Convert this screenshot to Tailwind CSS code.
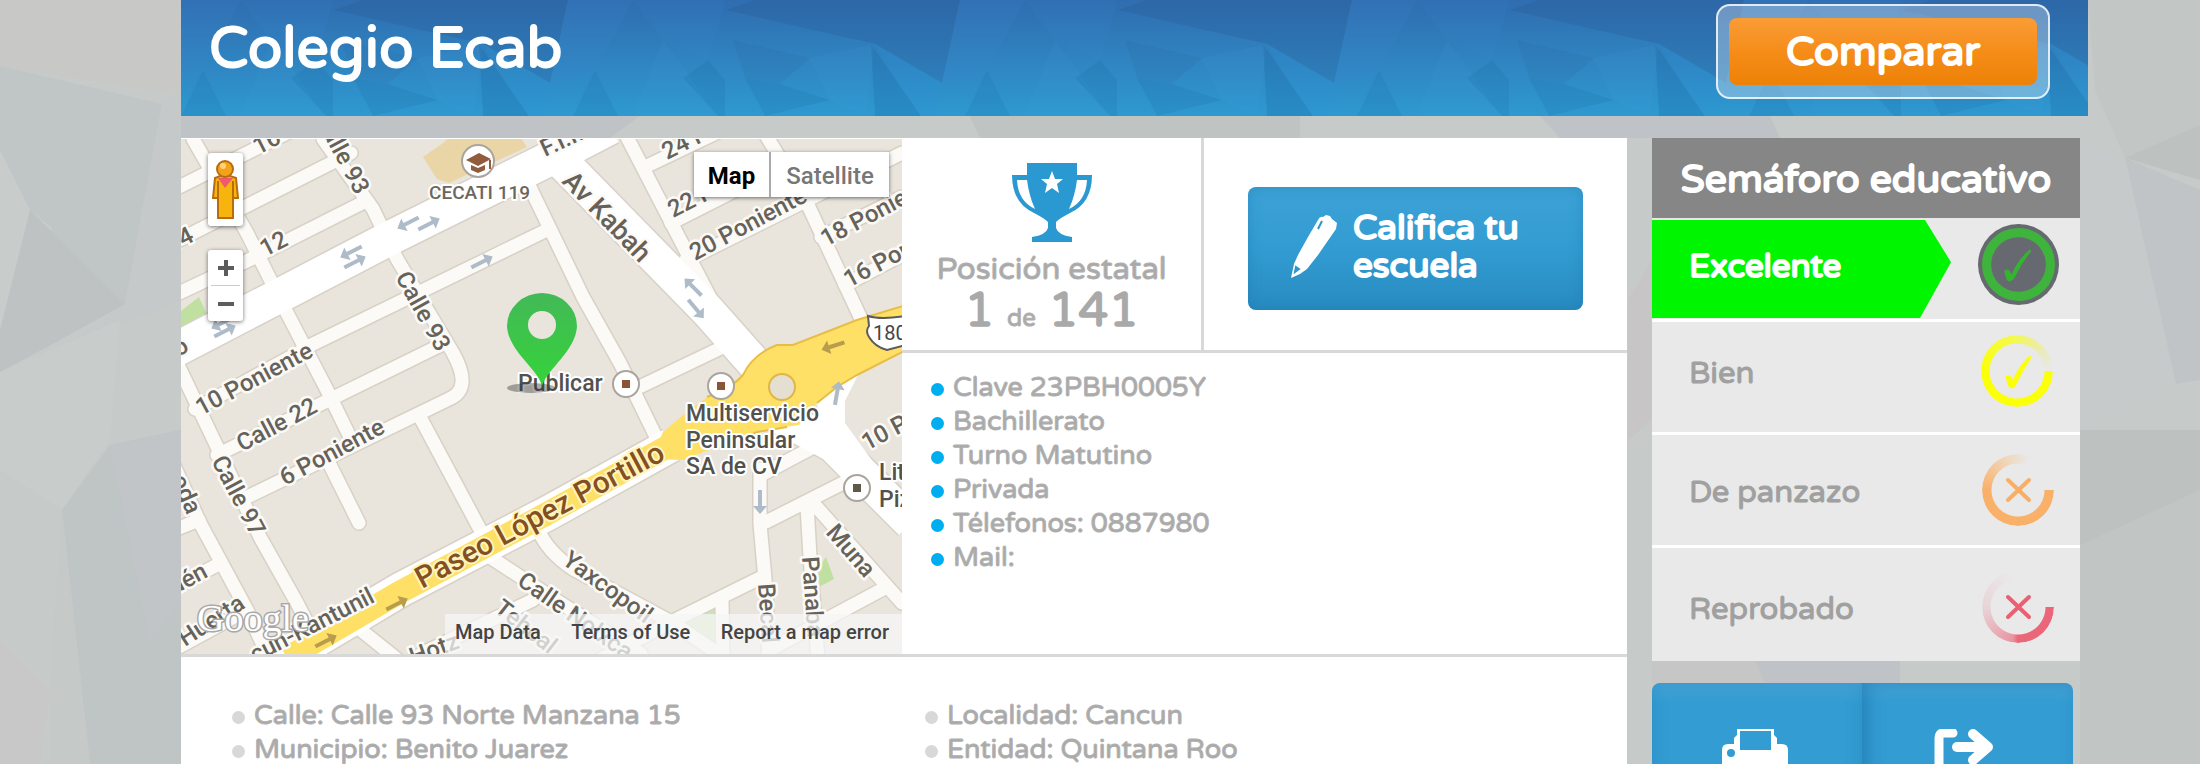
<!DOCTYPE html>
<html lang="es">
<head>
<meta charset="utf-8">
<title>Colegio Ecab</title>
<script src="https://cdn.jsdelivr.net/npm/@tailwindcss/browser@4"></script>
</head>
<body class="bg-[#c5c9c9] font-['Varela_Round','Open_Sans',sans-serif] text-[#a9a9a9]">
<div class="relative isolate h-screen overflow-hidden pl-[181px] pr-[112px]">

  <!-- Faceted paper background -->
  <svg class="absolute inset-0 -z-10 h-full w-full" viewBox="0 0 2200 764" preserveAspectRatio="xMidYMid slice" aria-hidden="true">
    <rect width="2200" height="764" fill="#c6cac9"/>
    <path d="M0 0H181V95L0 66Z" fill="#c8c8c7"/>
    <path d="M0 66L162 104L125 304L30 210L0 150Z" fill="#c0c5c6"/>
    <path d="M0 150L30 210L52 228L0 330Z" fill="#c8cccb"/>
    <path d="M125 304L162 104L181 90V300L60 350Z" fill="#c6c9c9"/>
    <path d="M30 210L125 304L60 340L0 372V330Z" fill="#bec2c2"/>
    <path d="M0 372L120 320L110 440L62 510L0 470Z" fill="#c8cccb"/>
    <path d="M62 510L110 445L181 430V764H90Z" fill="#bfc4c4"/>
    <path d="M110 445L181 430V600L150 640Z" fill="#c1c5c7"/>
    <path d="M0 640L50 690L40 764H0Z" fill="#c8c8c8"/>
    <path d="M62 510L90 764H50L50 690Z" fill="#c5c9c8"/>
    <path d="M181 116H640L610 138H181Z" fill="#c0c3c6"/>
    <path d="M970 116L980 138H1300V116Z" fill="#bfc3c2"/>
    <path d="M1540 116H1770L1780 138H1560Z" fill="#bfc3c8"/>
    <path d="M2088 0H2200V130L2125 158L2095 90Z" fill="#c2c6c5"/>
    <path d="M2125 158L2200 125V180Z" fill="#bdc2c1"/>
    <path d="M2125 158L2200 190V380L2176 384Z" fill="#c1c4c7"/>
    <path d="M2080 138L2125 158L2176 384L2080 430Z" fill="#c7caca"/>
    <path d="M2080 430H2200V500L2080 545Z" fill="#bdc2c1"/>
    <path d="M2080 545L2200 490V764H2080Z" fill="#c1c5c4"/>
    <path d="M1628 300L1652 260V420L1628 440Z" fill="#c7c5c5"/>
    <path d="M1652 661H1760L1770 683H1652Z" fill="#c7c6c6"/>
    <path d="M1755 661H1900V683H1765Z" fill="#bfc3c7"/>
  </svg>

  <header class="relative isolate flex h-[116px] items-start justify-between bg-linear-to-b from-[#2f6db0] to-[#2e99d0] pl-[28px] pr-[38px]">
    <svg class="absolute inset-0 -z-10 h-full w-full" aria-hidden="true">
      <defs>
        <pattern id="facets" x="152" y="0" width="392" height="116" patternUnits="userSpaceOnUse">
          <path d="M0 10L30 0H235L217 83L150 44Z" fill="#24548f" fill-opacity=".24"/>
          <path d="M146 44L196 116H150Z" fill="#0d5c94" fill-opacity=".2"/>
          <path d="M150 44L217 83L210 116H196Z" fill="#2a8fd0" fill-opacity=".2"/>
          <path d="M8 40L85 58L55 84L20 78Z" fill="#24548f" fill-opacity=".1"/>
          <path d="M20 78L55 84L105 100L40 116Z" fill="#0d5c94" fill-opacity=".14"/>
          <path d="M85 58L150 44L140 116L105 100Z" fill="#49a4de" fill-opacity=".08"/>
          <path d="M235 0H300L262 70L217 83Z" fill="#3f86cf" fill-opacity=".16"/>
          <path d="M262 70L285 116H240Z" fill="#0d5c94" fill-opacity=".12"/>
          <path d="M300 0H392L375 60L330 40Z" fill="#3f86cf" fill-opacity=".08"/>
          <path d="M330 40L385 116H300Z" fill="#49a4de" fill-opacity=".1"/>
          <path d="M375 60L392 80V116H385L350 78Z" fill="#0d5c94" fill-opacity=".14"/>
        </pattern>
      </defs>
      <rect width="100%" height="100%" fill="url(#facets)"/>
    </svg>
    <h1 class="pt-[17px] text-[57px] leading-[64px] text-white [-webkit-text-stroke:2px_#fff]">Colegio Ecab</h1>
    <div class="mt-[4px] rounded-[14px] border-2 border-white/80 bg-white/30 px-[11px] py-[12px]">
      <button type="button" class="h-[67px] w-[308px] rounded-[8px] bg-linear-to-b from-[#fa9c35] via-[#f58d17] to-[#ee8107] text-[41px] leading-[48px] text-white [-webkit-text-stroke:2px_#fff]">Comparar</button>
    </div>
  </header>

  <div class="mt-[22px] flex items-start gap-[25px] pr-[8px]">
    <main class="min-w-0 flex-1 bg-white">
      <div class="flex border-b-[3px] border-[#d8d8d8]">

        <!-- Map -->
        <section aria-label="Mapa" class="relative mt-px h-[515px] w-[721px] shrink-0 overflow-hidden font-['Roboto',sans-serif] text-[#444]">
          <svg class="block h-full w-full" viewBox="0 0 721 515" preserveAspectRatio="xMidYMid slice" font-family="Roboto, sans-serif">
            <defs>
              <g id="minor" fill="none" stroke-linecap="round" stroke-linejoin="round">
                <path d="M12 0L66 94L92 146L106 174L146 251L168 296"/>
                <path d="M149 326L178 384"/>
                <path d="M142 0L192 70L216 120L272 214Q292 250 268 260L62 360"/>
                <path d="M-2 48L110 -8"/><path d="M-2 101L170 14"/>
                <path d="M-2 154L72 119L185 62"/>
                <path d="M126 208L366 91"/><path d="M36 316L264 204"/><path d="M14 270L128 208"/>
                <path d="M345 40L402 158L439 224L478 304"/>
                <path d="M450 252L542 208"/>
                <path d="M446 -2L506 114L535 170"/><path d="M468 26L560 -18"/>
                <path d="M490 84L600 28"/><path d="M504 122L721 14"/>
                <path d="M586 -2L626 64L682 184"/>
                <path d="M640 98L721 58"/><path d="M664 146L721 116"/>
                <path d="M-2 228L39 314L79 398L116 464L132 495"/>
                <path d="M-10 320L19 384L66 471L86 515"/>
                <path d="M-2 389L18 381"/><path d="M-2 446L38 425"/><path d="M-2 508L64 472"/>
                <path d="M239 278L302 396"/>
                <path d="M309 418L370 458L460 515"/>
                <path d="M358 392Q366 412 392 430L492 484L545 520"/>
                <path d="M352 461L240 515"/><path d="M176 488L216 520"/>
                <path d="M579 330V385L585 451L588 520"/>
                <path d="M581 438L492 482L420 520"/><path d="M541 462L542 520"/>
                <path d="M585 383L664 343"/><path d="M580 336L640 304"/>
                <path d="M626 366L629 418L637 520"/>
                <path d="M632 364L721 464"/><path d="M702 450L590 510"/>
              </g>
              <g id="major" fill="none">
                <path d="M-10 213L211 98L380 14L430 -12"/>
                <path d="M378 20L526 171L580 232"/>
                <path d="M592 274L652 306L730 384"/>
                <path d="M100 522L219 451L369 373L490 306"/>
              </g>
              <path id="arrow" d="M-12 -2H4V-7L12 0L4 7V2H-12Z"/>
              <linearGradient id="pin" x1="0" y1="0" x2="0" y2="1"><stop offset="0" stop-color="#43b957"/><stop offset="1" stop-color="#35d33a"/></linearGradient>
            </defs>
            <rect width="721" height="515" fill="#e9e5dd"/>
            <path d="M242 18L262 4L268 -1H340L346 8L268 44L256 40Z" fill="#e9d5a6"/>
            <path d="M0 172L18 158L26 176L0 192Z" fill="#bfe0a0"/>
            <path d="M637 430L645 418L653 440L638 448Z" fill="#bfe0a0"/>
            <path d="M500 480L534 470V515H530L500 500Z" fill="#c9e3b4"/>
            <use href="#minor" stroke="#d8d1c6" stroke-width="16"/>
            <use href="#major" stroke="#d8d1c6" stroke-width="37"/>
            <use href="#minor" stroke="#fbfaf7" stroke-width="13"/>
            <use href="#major" stroke="#fff" stroke-width="34"/>
            <path d="M636 262L656 246L678 234L664 262V284L690 320L640 300Z" fill="#fff"/>
            <path d="M482 293L502 276L526 258Q552 248 562 236Q572 215 596 206H612L676 181L725 166V211L676 236L656 248L636 264L618 286L576 292L502 321L470 320Z" fill="#ffe067"/>
            <path d="M526 258Q552 248 562 236Q572 215 596 206H612L676 181L725 166M725 211L676 236L656 248L636 264M606 288L576 293L560 300" fill="none" stroke="#e8bd45" stroke-width="2"/>
            <path d="M106 519L219 453L369 373L500 300" fill="none" stroke="#ffe067" stroke-width="23"/>
            <circle cx="601" cy="248" r="13" fill="#e5dfd2" stroke="#e0b646" stroke-width="2"/>

            <g fill="#aebbc8">
              <use href="#arrow" transform="translate(227 84) rotate(153)"/><use href="#arrow" transform="translate(248 85) rotate(-27)"/>
              <use href="#arrow" transform="translate(170 113) rotate(153)"/><use href="#arrow" transform="translate(174 123) rotate(-27)"/>
              <use href="#arrow" transform="translate(41 184) rotate(153)"/><use href="#arrow" transform="translate(44 192) rotate(-27)"/>
              <use href="#arrow" transform="translate(301 123) rotate(-27)"/>
              <use href="#arrow" transform="translate(512 148) rotate(225)"/><use href="#arrow" transform="translate(515 170) rotate(50)"/>
              <use href="#arrow" transform="translate(579 363) rotate(90)"/><use href="#arrow" transform="translate(656 254) rotate(-80)"/>
            </g>
            <g fill="#b89d4c">
              <use href="#arrow" transform="translate(652 207) rotate(162)"/><use href="#arrow" transform="translate(216 465) rotate(-27)"/><use href="#arrow" transform="translate(145 502) rotate(-27)"/>
            </g>

            <g font-size="24" font-weight="500" fill="#66625a" stroke="#fbfaf7" stroke-width="5" stroke-linejoin="round" paint-order="stroke">
              <text transform="translate(77 16) rotate(-27)">16</text>
              <text transform="translate(134 -20) rotate(62)">Calle 93</text>
              <text transform="translate(84 118) rotate(-27)">12</text>
              <text transform="translate(-10 114) rotate(-27)">14</text>
              <text transform="translate(-3 218) rotate(-27)">o</text>
              <text transform="translate(214 138) rotate(61)">Calle 93</text>
              <text transform="translate(20 277) rotate(-28)">10 Poniente</text>
              <text transform="translate(61 313) rotate(-28)">Calle 22</text>
              <text transform="translate(104 347) rotate(-28)">6 Poniente</text>
              <text transform="translate(30 322) rotate(62)">Calle 97</text>
              <text transform="translate(-10 340) rotate(66)">oda</text>
              <text transform="translate(-7 456) rotate(-28)">dén</text>
              <text transform="translate(4 508) rotate(-33)">Huerta</text>
              <text transform="translate(74 524) rotate(-27)">cun-Kantunil</text>
              <text transform="translate(364 18) rotate(-25)">F.I.M.</text>
              <text transform="translate(486 21) rotate(-27)">24 P</text>
              <text transform="translate(492 79) rotate(-27)">22 P</text>
              <text transform="translate(514 122) rotate(-28)">20 Poniente</text>
              <text transform="translate(645 108) rotate(-28)">18 Poniente</text>
              <text transform="translate(668 149) rotate(-28)">16 Poniente</text>
              <text transform="translate(686 312) rotate(-28)">10 Poniente</text>
              <text transform="translate(380 424) rotate(36)">Yaxcopoil</text>
              <text transform="translate(335 445) rotate(35)">Calle Nolxca</text>
              <text transform="translate(644 394) rotate(49)">Muna</text>
              <text transform="translate(621 418) rotate(86)">Panaba</text>
              <text transform="translate(577 445) rotate(86)">Becal</text>
              <text transform="translate(312 472) rotate(38)">Tehcal</text>
              <text transform="translate(232 526) rotate(-20)">Hotz</text>
              <text transform="translate(380 43) rotate(46)" font-size="27">Av Kabah</text>
            </g>
            <text transform="translate(241 450) rotate(-28)" font-size="30" font-weight="500" fill="#84501f" stroke="#fff4bd" stroke-width="4" paint-order="stroke">Paseo López Portillo</text>

            <g fill="#fff" stroke="#aaa59c" stroke-width="2">
              <circle cx="297" cy="22" r="16"/><circle cx="445" cy="245" r="13"/><circle cx="540" cy="247" r="13"/><circle cx="676" cy="349" r="13"/>
            </g>
            <path d="M285 21L298 14L310 20L297 27ZM290 26L297 29L304 26V31L297 34L290 31ZM308 21H310V30H308Z" fill="#905c3c"/>
            <g fill="#8a5436"><rect x="441" y="241" width="8" height="8"/><rect x="536" y="243" width="8" height="8"/><rect x="672" y="345" width="8" height="8" fill="#5f594b"/></g>

            <g font-size="23" font-weight="500" fill="#53514c" stroke="#fff" stroke-width="4" stroke-linejoin="round" paint-order="stroke">
              <text x="248" y="60" font-size="19" fill="#6b675f">CECATI 119</text>
              <text x="337" y="252">Publicar</text>
              <text x="505" y="282">Multiservicio</text>
              <text x="505" y="309">Peninsular</text>
              <text x="505" y="335">SA de CV</text>
              <text x="698" y="341">Litto</text>
              <text x="698" y="368">Pizza</text>
            </g>
            <path d="M687 177Q700 181 725 177V206L706 211Q694 208 688 198Q684 192 688 187Z" fill="#fff" stroke="#5b5b5b" stroke-width="2"/>
            <text x="692" y="201" font-size="20" fill="#444">180</text>

            <ellipse cx="350" cy="249" rx="24" ry="5" fill="#333" fill-opacity=".4"/>
            <path fill-rule="evenodd" d="M361 247C357 230 327 212 326 187A35 33 0 0 1 396 187C395 212 366 230 361 247ZM361 172A14 14 0 1 0 361 200A14 14 0 1 0 361 172Z" fill="url(#pin)"/>
            <text x="16" y="492" font-family="Liberation Serif, serif" font-size="38" fill="#fff" stroke="#a8a8a8" stroke-width="3" paint-order="stroke">Google</text>
          </svg>

          <button type="button" aria-label="Street View" class="absolute left-[27px] top-[14px] h-[73px] w-[35px] rounded-[3px] bg-white shadow-[0_1px_4px_rgba(0,0,0,.55)]">
            <svg viewBox="0 0 35 73" class="h-full w-full" stroke="#b86c12" stroke-width="2">
              <path d="M7 25Q17 20 28 25L30 45H25V65H10V45H5Z" fill="#f7b40d"/>
              <path d="M10 28V44M25 28V44" fill="none"/>
              <path d="M10 25H25L17 35Z" fill="#ef5b6c" stroke="none"/>
              <circle cx="17" cy="16" r="8" fill="#f4a21a"/>
              <circle cx="15" cy="13" r="3" fill="#ffd37a" stroke="none"/>
            </svg>
          </button>
          <div class="absolute left-[27px] top-[111px] flex h-[71px] w-[35px] flex-col divide-y divide-[#ccc] rounded-[3px] bg-white px-[3px] shadow-[0_1px_4px_rgba(0,0,0,.55)]">
            <button type="button" aria-label="Acercar" class="grid flex-1 place-items-center"><svg class="size-[18px]" viewBox="0 0 18 18"><path d="M1 9H17M9 1V17" stroke="#5c5c5c" stroke-width="4"/></svg></button>
            <button type="button" aria-label="Alejar" class="grid flex-1 place-items-center"><svg class="size-[18px]" viewBox="0 0 18 18"><path d="M1 9H17" stroke="#5c5c5c" stroke-width="4"/></svg></button>
          </div>
          <div class="absolute right-[13px] top-[13px] flex h-[45px] divide-x-2 divide-[#aaa] bg-white text-[24px] shadow-[0_1px_4px_rgba(0,0,0,.55)]">
            <button type="button" class="w-[77px] pt-[3px] font-bold text-black">Map</button>
            <button type="button" class="w-[118px] pt-[3px] font-medium text-[#777]">Satellite</button>
          </div>
          <nav class="absolute bottom-0 right-0 flex h-[40px] w-[457px] items-center justify-between bg-[#f5f5f5]/75 pb-[4px] pl-[10px] pr-[13px] text-[20px] font-medium">
            <a href="#">Map Data</a><a href="#">Terms of Use</a><a href="#">Report a map error</a>
          </nav>
        </section>

        <div class="flex min-w-0 flex-1 flex-col">
          <div class="flex h-[215px] border-b-[3px] border-[#d8d8d8]">
            <section class="flex w-[302px] shrink-0 flex-col items-center border-r-[3px] border-[#d8d8d8] pt-[25px]">
              <svg class="h-[79px] w-[80px]" viewBox="0 0 80 79" fill="#2b99d1" aria-hidden="true">
                <path d="M15 0H65V12H80Q80 40 58 50Q48 55 44 59V65Q46 72 60 74V79H20V74Q34 72 36 65V59Q32 55 22 50Q0 40 0 12H15Z"/>
                <path d="M5 17H15Q17 33 23 46Q6 38 5 17ZM75 17H65Q63 33 57 46Q74 38 75 17Z" fill="#fff"/>
                <path d="M40 8L43 16H51L45 21L47 30L40 25L33 30L35 21L29 16H37Z" fill="#fff"/>
              </svg>
              <p class="pt-[8px] text-[31px] leading-[40px] [-webkit-text-stroke:1px_#b0b0b0]">Posición estatal</p>
              <p class="text-[48px] leading-[42px] font-bold">1 <span class="text-[24px] font-normal [-webkit-text-stroke:1px_#b0b0b0]">de</span> 141</p>
            </section>
            <div class="flex flex-1 items-center justify-center pt-[9px]">
              <button type="button" class="flex h-[123px] w-[335px] items-center rounded-[8px] bg-linear-to-b from-[#3da2d6] via-[#329cd2] to-[#288bc0] pl-[42px] pb-[3px] text-left text-[35px] leading-[38px] text-white shadow-[inset_0_0_14px_rgba(20,110,165,.35)] [-webkit-text-stroke:2px_#fff]">
                <svg class="h-[64px] w-[48px] shrink-0" viewBox="0 0 48 64" fill="#fff" aria-hidden="true">
                  <path d="M1 63L4 49L8 40L18 22L28 5Q30 1 33 2L36 0L40 1L42 4L47 8L46 14L28 40L17 54L10 59Z"/>
                  <path d="M6 52L9 54L5 57ZM32 6L28 14" fill="#2f95ca" stroke="#2f95ca" stroke-width="2"/>
                </svg>
                <span class="pl-[15px]">Califica tu<br>escuela</span>
              </button>
            </div>
          </div>
          <ul class="pl-[29px] pt-[18px] text-[27px] leading-[34px] [-webkit-text-stroke:1px_#b0b0b0]">
            <li class="flex items-center gap-[9px]"><span class="mt-[2px] size-[13px] rounded-full bg-[#00adee]"></span>Clave 23PBH0005Y</li>
            <li class="flex items-center gap-[9px]"><span class="mt-[2px] size-[13px] rounded-full bg-[#00adee]"></span>Bachillerato</li>
            <li class="flex items-center gap-[9px]"><span class="mt-[2px] size-[13px] rounded-full bg-[#00adee]"></span>Turno Matutino</li>
            <li class="flex items-center gap-[9px]"><span class="mt-[2px] size-[13px] rounded-full bg-[#00adee]"></span>Privada</li>
            <li class="flex items-center gap-[9px]"><span class="mt-[2px] size-[13px] rounded-full bg-[#00adee]"></span>Télefonos: 0887980</li>
            <li class="flex items-center gap-[9px]"><span class="mt-[2px] size-[13px] rounded-full bg-[#00adee]"></span>Mail:</li>
          </ul>
        </div>
      </div>

      <div class="flex pb-[60px] pl-[51px] pt-[42px] text-[27px] leading-[34px] [-webkit-text-stroke:1px_#b0b0b0]">
        <ul class="w-[693px]">
          <li class="flex items-center gap-[9px]"><span class="mt-[2px] size-[13px] rounded-full bg-[#d8d8d8]"></span>Calle: Calle 93 Norte Manzana 15</li>
          <li class="flex items-center gap-[9px]"><span class="mt-[2px] size-[13px] rounded-full bg-[#d8d8d8]"></span>Municipio: Benito Juarez</li>
        </ul>
        <ul class="flex-1">
          <li class="flex items-center gap-[9px]"><span class="mt-[2px] size-[13px] rounded-full bg-[#d8d8d8]"></span>Localidad: Cancun</li>
          <li class="flex items-center gap-[9px]"><span class="mt-[2px] size-[13px] rounded-full bg-[#d8d8d8]"></span>Entidad: Quintana Roo</li>
        </ul>
      </div>
    </main>

    <aside class="w-[428px] shrink-0">
      <h2 class="h-[80px] bg-[#868686] pt-[15px] text-center text-[39px] leading-[54px] text-white [-webkit-text-stroke:2px_#fff]">Semáforo educativo</h2>
      <ul class="divide-y-[3px] divide-white border-t-2 border-[#e9e9e9] bg-[#e9e9e9] text-[31px] leading-[40px] text-[#a0a0a0] [-webkit-text-stroke:1px_currentColor]">
        <li class="flex h-[102px] items-start justify-between pr-[21px]">
          <span class="flex h-[98px] w-[299px] items-center bg-[#00f600] pb-[4px] pl-[37px] text-[33px] text-white [-webkit-text-stroke:2px_#fff] [clip-path:polygon(0_0,273px_0,100%_43%,268px_100%,0_100%)]">Excelente</span>
          <svg class="mt-[4px] size-[81px]" viewBox="0 0 80 80" aria-hidden="true">
            <circle cx="40" cy="40" r="40" fill="#66696f"/><circle cx="40" cy="40" r="31.500" fill="none" stroke="#3fb43c" stroke-width="9"/>
            <path d="M27 47Q30 44 32 50L33 53Q40 35 52 26Q42 38 35 53Q31 58 29 54Z" fill="#35b432" stroke="#35b432" stroke-width="2"/>
          </svg>
        </li>
        <li class="flex h-[113px] items-start justify-between pl-[37px] pr-[27px]">
          <span class="pt-[32px]">Bien</span>
          <span class="relative mt-[13px] size-[72px]">
            <span class="absolute inset-0 rounded-full bg-[conic-gradient(from_90deg,#fbff08_0deg,#fbff08_180deg,#f3fa48_260deg,#e9e9c8_330deg,#e9e9e9_360deg)] [mask:radial-gradient(circle,transparent_27px,#000_28px)]"></span>
            <svg class="absolute inset-0 size-full" viewBox="-4 -4 80 80" aria-hidden="true"><path d="M25 43Q29 41 30 48L31 51Q38 32 51 20Q41 35 33 52Q29 56 27 51Z" fill="#fbff08" stroke="#fbff08" stroke-width="3"/></svg>
          </span>
        </li>
        <li class="flex h-[113px] items-start justify-between pl-[37px] pr-[26px]">
          <span class="pt-[38px]">De panzazo</span>
          <span class="relative mt-[19px] size-[72px]">
            <span class="absolute inset-0 rounded-full bg-[conic-gradient(from_90deg,#f9b069_0deg,#f9b069_180deg,#f3cfab_235deg,#e9e9e9_290deg)] [mask:radial-gradient(circle,transparent_26px,#000_27px)]"></span>
            <svg class="absolute inset-0 size-full" viewBox="0 0 72 72" aria-hidden="true"><path d="M26 26L47 46M47 26L26 46" stroke="#f9ae66" stroke-width="4" stroke-linecap="round"/></svg>
          </span>
        </li>
        <li class="flex h-[113px] items-start justify-between pl-[37px] pr-[26px]">
          <span class="pt-[42px]">Reprobado</span>
          <span class="relative mt-[23px] size-[72px]">
            <span class="absolute inset-0 rounded-full bg-[conic-gradient(from_90deg,#eb6678_0deg,#eb6678_90deg,#e996a2_100deg,#e8d5d9_180deg,#e9e9e9_260deg)] [mask:radial-gradient(circle,transparent_27px,#000_28px)]"></span>
            <svg class="absolute inset-0 size-full" viewBox="0 0 72 72" aria-hidden="true"><path d="M26 26L47 46M47 26L26 46" stroke="#ea5f72" stroke-width="4" stroke-linecap="round"/></svg>
          </span>
        </li>
      </ul>
      <div class="mr-[7px] mt-[22px] flex h-[130px] overflow-hidden rounded-[8px] bg-linear-to-b from-[#45a4d7] via-[#339cd2] via-[20px] to-[#339cd2]">
        <button type="button" aria-label="Imprimir" class="flex w-[210px] justify-center pr-[4px] pt-[46px] shadow-[inset_0_0_16px_rgba(25,115,170,.3)]">
          <svg class="h-[60px] w-[66px]" viewBox="0 0 66 60" fill="#fff" aria-hidden="true">
            <path fill-rule="evenodd" d="M15 0H52V6L55 9V15H60Q66 15 66 21V46H56V60H10V46H0V21Q0 15 6 15H12V9L15 6ZM18 2V21H49V2ZM9 20A4 4 0 1 0 9 28A4 4 0 1 0 9 20Z"/>
          </svg>
        </button>
        <button type="button" aria-label="Compartir" class="flex flex-1 justify-center pr-[6px] pt-[46px] shadow-[inset_6px_0_16px_rgba(15,95,150,.4)]">
          <svg class="h-[60px] w-[62px]" viewBox="0 0 62 60" fill="none" stroke="#fff" stroke-linecap="round" stroke-linejoin="round" aria-hidden="true">
            <path d="M19 4H9Q5 4 5 9V50Q5 55 9 55H42Q47 55 47 50V42" stroke-width="9"/><path d="M23 18H52" stroke-width="10"/><path d="M39 5L54 18L39 31" stroke-width="10"/>
          </svg>
        </button>
      </div>
    </aside>
  </div>
</div>
</body>
</html>
